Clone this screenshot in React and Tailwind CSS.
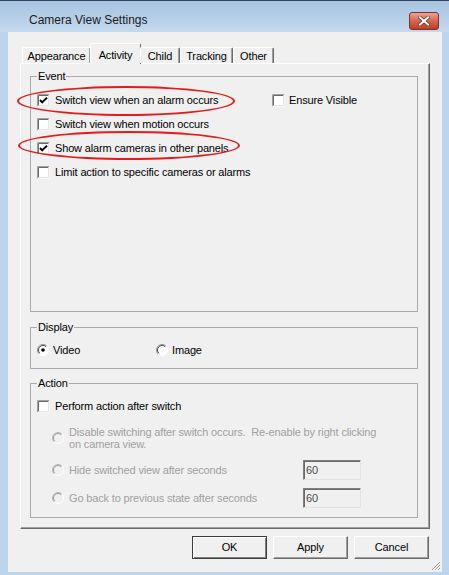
import React from "react";

const Check = ({ checked }) => (
  <svg width="13" height="13" viewBox="0 0 13 13" className="shrink-0">
    <rect x="0" y="0" width="13" height="13" fill="#ffffff" />
    <path d="M0.5 12.5 V0.5 H12.5" stroke="#a0a0a0" fill="none" />
    <path d="M1.5 11.5 V1.5 H11.5" stroke="#696969" fill="none" />
    <path d="M0.5 12.5 H12.5 V0.5" stroke="#f6f6f6" fill="none" />
    <path d="M1.5 11.5 H11.5 V1.5" stroke="#e3e3e3" fill="none" />
    {checked && (
      <path d="M3 6 L5.2 8.3 L10 3.6" stroke="#000" strokeWidth="1.9" fill="none" />
    )}
  </svg>
);

const Radio = ({ checked, disabled }) => (
  <svg width="12" height="12" viewBox="0 0 12 12" className="shrink-0">
    <circle cx="6" cy="6" r="5.5" fill={disabled ? "#f0f0f0" : "#ffffff"} />
    <path d="M2.1 9.9 A5.5 5.5 0 0 1 9.9 2.1" stroke={disabled ? "#b4b4b4" : "#8f8f8f"} fill="none" />
    <path d="M2.8 9.2 A4.5 4.5 0 0 1 9.2 2.8" stroke={disabled ? "#9a9a9a" : "#4a4a4a"} fill="none" />
    <path d="M2.1 9.9 A5.5 5.5 0 0 0 9.9 2.1" stroke="#ffffff" fill="none" />
    {checked && <circle cx="6" cy="6" r="1.8" fill="#000" />}
  </svg>
);

const tabs = [
  { label: "Appearance", w: "w-[69px]" },
  { label: "Activity", w: "w-[51px]", active: true },
  { label: "Child", w: "w-[40px]" },
  { label: "Tracking", w: "w-[53px]" },
  { label: "Other", w: "w-[41px]" },
];

const Group = ({ title, className, children }) => (
  <fieldset className={`border border-[#a9a9a9] ml-[9px] mr-[11px] ${className}`}>
    <legend className="ml-[6px] px-[1px] leading-[13px]">{title}</legend>
    {children}
  </fieldset>
);

const Button = ({ children, isDefault }) => (
  <button
    className={`w-[75px] h-[23px] bg-[#f0f0f0] leading-none ${
      isDefault
        ? "border border-[#3c3c3c] shadow-[inset_1px_1px_0_#fff,inset_-1px_-1px_0_#808080]"
        : "border border-t-white border-l-white border-r-[#696969] border-b-[#696969] shadow-[inset_-1px_-1px_0_#a0a0a0]"
    }`}
  >
    {children}
  </button>
);

export default function App() {
  return (
    <div className="relative w-[449px] h-[575px] bg-[#bcd4ec] font-['Liberation_Sans',sans-serif] text-[11px] tracking-[-0.15px] text-black overflow-hidden">
      {/* title bar */}
      <div className="h-[32px] flex items-center justify-between border-t border-[#33445a] bg-linear-to-b from-[#a6c3e0] to-[#c4d9ee]">
        <span className="pl-[29px] pt-[6px] text-[12px] tracking-normal text-[#1b1b1b]">Camera View Settings</span>
        <div className="mr-[10px] mt-[8px] w-[30px] h-[18px] rounded-[3px] border border-[#7e3324] bg-linear-to-b from-[#e7a495] via-[#d3654f] to-[#c13b22] flex items-center justify-center">
          <svg width="12" height="10" viewBox="0 0 12 10">
            <path d="M2 1.5 L10 8.5 M10 1.5 L2 8.5" stroke="#5a1d12" strokeWidth="3.4" strokeLinecap="square" />
            <path d="M2 1.5 L10 8.5 M10 1.5 L2 8.5" stroke="#ffffff" strokeWidth="2.2" strokeLinecap="square" />
          </svg>
        </div>
      </div>

      {/* client area */}
      <div className="relative ml-[8px] mr-[7px] h-[540px] bg-[#f0f0f0] px-[12px] pt-[11px]">
        {/* tabs */}
        <div className="relative z-10 flex h-[21px] pl-[2px]">
          {tabs.map((t) =>
            t.active ? (
              <div
                key={t.label}
                className={`${t.w} h-[21px] -mx-[1px] bg-[#f0f0f0] border-t border-l border-white border-r border-r-[#696969] rounded-t-[2px] flex items-start justify-center pt-[3px]`}
              >
                {t.label}
              </div>
            ) : (
              <div
                key={t.label}
                className={`${t.w} mt-[4px] h-[16px] border-t border-l border-white border-r border-r-[#696969] shadow-[inset_-1px_0_0_#a0a0a0] rounded-t-[2px] flex items-center justify-center pt-[2px]`}
              >
                {t.label}
              </div>
            )
          )}
        </div>

        {/* tab page */}
        <div className="-mt-[1px] h-[466px] border border-t-white border-l-white border-r-[#696969] border-b-[#696969] shadow-[inset_-1px_-1px_0_#a0a0a0] pt-[6px]">
          <Group title="Event" className="h-[242px]">
            <div className="pt-[5px] pl-[6px]">
              <div className="flex h-[24px] items-center">
                <label className="w-[235px] flex items-center gap-[5px]">
                  <Check checked />
                  <span>Switch view when an alarm occurs</span>
                </label>
                <label className="flex items-center gap-[4px]">
                  <Check />
                  <span>Ensure Visible</span>
                </label>
              </div>
              <label className="flex h-[24px] items-center gap-[5px]">
                <Check />
                <span>Switch view when motion occurs</span>
              </label>
              <label className="flex h-[24px] items-center gap-[5px]">
                <Check checked />
                <span>Show alarm cameras in other panels</span>
              </label>
              <label className="flex h-[24px] items-center gap-[5px]">
                <Check />
                <span>Limit action to specific cameras or alarms</span>
              </label>
            </div>
          </Group>

          <Group title="Display" className="mt-[9px] h-[48px]">
            <div className="pt-[4px] pl-[6px] flex h-[28px] items-center">
              <label className="w-[119px] flex items-center gap-[4px]">
                <Radio checked />
                <span>Video</span>
              </label>
              <label className="flex items-center gap-[4px]">
                <Radio />
                <span>Image</span>
              </label>
            </div>
          </Group>

          <Group title="Action" className="mt-[8px] h-[141px]">
            <div className="pt-[4px] pl-[6px]">
              <label className="flex h-[24px] items-center gap-[5px]">
                <Check />
                <span>Perform action after switch</span>
              </label>
              <div className="pl-[15px] text-[#a0a0a0]">
                <div className="mt-[8px] flex items-center gap-[5px]">
                  <Radio disabled />
                  <span className="leading-[12px] w-[320px]">
                    Disable switching after switch occurs.&nbsp; Re-enable by right clicking on camera view.
                  </span>
                </div>
                <div className="mt-[10px] flex items-center">
                  <label className="w-[251px] flex items-center gap-[5px]">
                    <Radio disabled />
                    <span>Hide switched view after seconds</span>
                  </label>
                  <div className="w-[58px] h-[20px] border border-t-[#808080] border-l-[#808080] border-b-[#e3e3e3] border-r-[#e3e3e3] shadow-[inset_1px_1px_0_#696969] bg-[#f0f0f0] text-[#4b4b4b] flex items-center pl-[2px]">
                    60
                  </div>
                </div>
                <div className="mt-[8px] flex items-center">
                  <label className="w-[251px] flex items-center gap-[5px]">
                    <Radio disabled />
                    <span>Go back to previous state after seconds</span>
                  </label>
                  <div className="w-[58px] h-[20px] border border-t-[#808080] border-l-[#808080] border-b-[#e3e3e3] border-r-[#e3e3e3] shadow-[inset_1px_1px_0_#696969] bg-[#f0f0f0] text-[#4b4b4b] flex items-center pl-[2px]">
                    60
                  </div>
                </div>
              </div>
            </div>
          </Group>
        </div>

        {/* buttons */}
        <div className="mt-[7px] flex justify-end gap-[6px] pr-[1px]">
          <Button isDefault>OK</Button>
          <Button>Apply</Button>
          <Button>Cancel</Button>
        </div>

        {/* size grip */}
        <svg width="11" height="11" viewBox="0 0 11 11" className="absolute right-[1px] bottom-[1px]">
          <path d="M10 2 L2 10 M10 5 L5 10 M10 8 L8 10" stroke="#a0a0a0" strokeWidth="1" />
          <path d="M10.5 3 L3 10.5 M10.5 6 L6 10.5 M10.5 9 L9 10.5" stroke="#ffffff" strokeWidth="1" />
        </svg>
      </div>

      {/* annotation ellipses */}
      <div className="absolute left-[17px] top-[86px] w-[218px] h-[30px] rounded-[50%] border-2 border-[#e31b1b]" />
      <div className="absolute left-[18px] top-[131px] w-[222px] h-[29px] rounded-[50%] border-2 border-[#e31b1b]" />
    </div>
  );
}
